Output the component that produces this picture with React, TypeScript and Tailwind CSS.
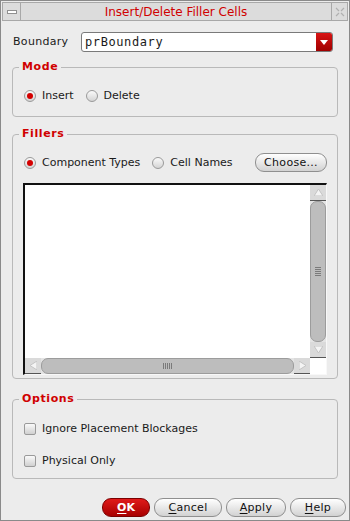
import React from "react";

const font = { fontFamily: '"DejaVu Sans", "Liberation Sans", sans-serif' };

function Radio({ on }: { on?: boolean }) {
  return (
    <span className="flex h-[12px] w-[12px] items-center justify-center rounded-full border border-[#9a9a9a] bg-gradient-to-b from-[#fafafa] to-[#d4d4d4]">
      {on && <span className="h-[6px] w-[6px] rounded-full bg-[#d40000]" />}
    </span>
  );
}

function Check() {
  return <span className="h-[12px] w-[12px] rounded-[2px] border border-[#9a9a9a] bg-gradient-to-b from-[#fafafa] to-[#d0d0d0]" />;
}

function Group({ title, className, children }: { title: string; className?: string; children: React.ReactNode }) {
  return (
    <div className={"relative rounded-[4px] border border-[#b9b9b9] " + (className ?? "")}>
      <span className="absolute left-[6px] top-[-8px] bg-[#ececec] px-[3px] text-[11px] font-bold leading-[14px] tracking-[0.6px] text-[#d00000]">
        {title}
      </span>
      {children}
    </div>
  );
}

function Btn({ children, className }: { children: React.ReactNode; className?: string }) {
  return (
    <button
      className={
        "flex h-[19px] items-center justify-center rounded-[9px] border border-[#8f8f8f] bg-gradient-to-b from-[#ffffff] to-[#d2d2d2] text-[11px] tracking-[0.3px] text-[#111] " +
        (className ?? "")
      }
    >
      {children}
    </button>
  );
}

export default function App() {
  return (
    <div style={font} className="flex h-[521px] w-[350px] flex-col border border-[#8a8a8a] bg-[#ececec] text-[11px] leading-[14px] text-[#1a1a1a]">
      {/* title bar */}
      <div className="mx-[1px] mt-[1px] flex h-[19px] border border-[#a8a8a8] bg-[#dcdcdc]">
        <div className="flex w-[18px] items-center justify-center border-r border-[#a8a8a8]">
          <span className="h-[4px] w-[10px] border border-[#909090] bg-white" />
        </div>
        <div className="flex flex-1 items-center justify-center text-[12px] text-[#d00000]">Insert/Delete Filler Cells</div>
        <div className="flex w-[16px] items-center justify-center border-l border-[#a8a8a8]">
          <svg width="10" height="10" viewBox="0 0 10 10" fill="none" stroke="#b0b0b0" strokeWidth="1.2">
            <path d="M1 1 L4 4 M9 1 L6 4 M1 9 L4 6 M9 9 L6 6" />
          </svg>
        </div>
      </div>

      <div className="flex flex-1 flex-col px-[11px]">
        {/* boundary */}
        <div className="mt-[11px] flex items-center">
          <span className="ml-[1px] w-[67px] tracking-[0.3px]">Boundary</span>
          <div className="ml-[1px] mr-[5px] flex h-[20px] flex-1 items-center overflow-hidden rounded-[3px] border border-[#7a7a7a] bg-white">
            <span className="flex-1 pl-[3px] text-[12px] tracking-[0.6px]" style={{ fontFamily: '"DejaVu Sans Mono", monospace' }}>
              prBoundary
            </span>
            <span className="flex h-full w-[16px] items-center justify-center bg-gradient-to-b from-[#d81414] to-[#a00000]">
              <svg width="8" height="5" viewBox="0 0 8 5">
                <path d="M0 0 H8 L4 5 Z" fill="#fff" />
              </svg>
            </span>
          </div>
        </div>

        {/* mode */}
        <Group title="Mode" className="mt-[15px] h-[50px]">
          <div className="mt-[21px] flex h-[14px] items-center pl-[11px]">
            <Radio on />
            <span className="ml-[6px]">Insert</span>
            <span className="ml-[12px]">
              <Radio />
            </span>
            <span className="ml-[6px]">Delete</span>
          </div>
        </Group>

        {/* fillers */}
        <Group title="Fillers" className="mt-[17px] h-[245px]">
          <div className="mt-[18px] flex items-center pl-[11px] pr-[10px]">
            <Radio on />
            <span className="ml-[6px]">Component Types</span>
            <span className="ml-[12px]">
              <Radio />
            </span>
            <span className="ml-[6px]">Cell Names</span>
            <Btn className="ml-auto w-[72px]">Choose...</Btn>
          </div>
          <div className="mx-[10px] mt-[11px] flex h-[192px] flex-col border-l-2 border-t-2 border-[#111] border-b border-r border-b-[#f8f8f8] border-r-[#f8f8f8] bg-white">
            <div className="flex flex-1">
              <div className="flex-1" />
              <div className="flex w-[16px] flex-col bg-[#e4e4e4]">
                <div className="flex h-[16px] items-center justify-center border-b border-[#555] bg-[#dadada]">
                  <svg width="9" height="7" viewBox="0 0 9 7"><path d="M0 7 L4.5 0 L9 7 Z" fill="#f4f4f4" stroke="#c4c4c4" /></svg>
                </div>
                <div className="flex flex-1 items-center justify-center rounded-[7px] border border-[#9c9c9c] bg-[#bdbdbd]">
                  <div className="flex flex-col gap-[1px]">
                    {[0, 1, 2, 3, 4].map((i) => (
                      <span key={i} className="h-[1px] w-[6px] bg-[#7a7a7a]" />
                    ))}
                  </div>
                </div>
                <div className="flex h-[16px] items-center justify-center border-b border-[#555] bg-[#dadada]">
                  <svg width="9" height="7" viewBox="0 0 9 7"><path d="M0 0 L4.5 7 L9 0 Z" fill="#f4f4f4" stroke="#c4c4c4" /></svg>
                </div>
              </div>
            </div>
            <div className="flex h-[16px]">
              <div className="flex flex-1 bg-[#e4e4e4]">
                <div className="flex w-[16px] items-center justify-center border-b border-[#555] bg-[#dadada]">
                  <svg width="7" height="9" viewBox="0 0 7 9"><path d="M7 0 L0 4.5 L7 9 Z" fill="#f4f4f4" stroke="#c4c4c4" /></svg>
                </div>
                <div className="flex flex-1 items-center justify-center rounded-[7px] border border-[#9c9c9c] bg-[#bdbdbd]">
                  <div className="flex gap-[1px]">
                    {[0, 1, 2, 3, 4].map((i) => (
                      <span key={i} className="h-[6px] w-[1px] bg-[#7a7a7a]" />
                    ))}
                  </div>
                </div>
                <div className="flex w-[16px] items-center justify-center border-b border-[#555] bg-[#dadada]">
                  <svg width="7" height="9" viewBox="0 0 7 9"><path d="M0 0 L7 4.5 L0 9 Z" fill="#f4f4f4" stroke="#c4c4c4" /></svg>
                </div>
              </div>
              <div className="w-[16px]" />
            </div>
          </div>
        </Group>

        {/* options */}
        <Group title="Options" className="mt-[20px] h-[80px]">
          <div className="mt-[22px] flex flex-col gap-[18px] pl-[11px]">
            <div className="flex h-[14px] items-center">
              <Check />
              <span className="ml-[6px]">Ignore Placement Blockages</span>
            </div>
            <div className="flex h-[14px] items-center">
              <Check />
              <span className="ml-[6px]">Physical Only</span>
            </div>
          </div>
        </Group>

        {/* buttons */}
        <div className="mr-[-8px] mt-[19px] flex justify-end gap-[4px]">
          <button className="flex h-[19px] w-[48px] items-center justify-center rounded-[9px] border border-[#7a0000] bg-gradient-to-b from-[#e01a1a] to-[#a80000] text-[11px] font-bold text-white">
            <span className="underline underline-offset-2">O</span>K
          </button>
          <Btn className="w-[68px]">
            <span className="underline underline-offset-2">C</span>ancel
          </Btn>
          <Btn className="w-[60px]">
            <span className="underline underline-offset-2">A</span>pply
          </Btn>
          <Btn className="w-[56px]">
            <span className="underline underline-offset-2">H</span>elp
          </Btn>
        </div>
      </div>
    </div>
  );
}
